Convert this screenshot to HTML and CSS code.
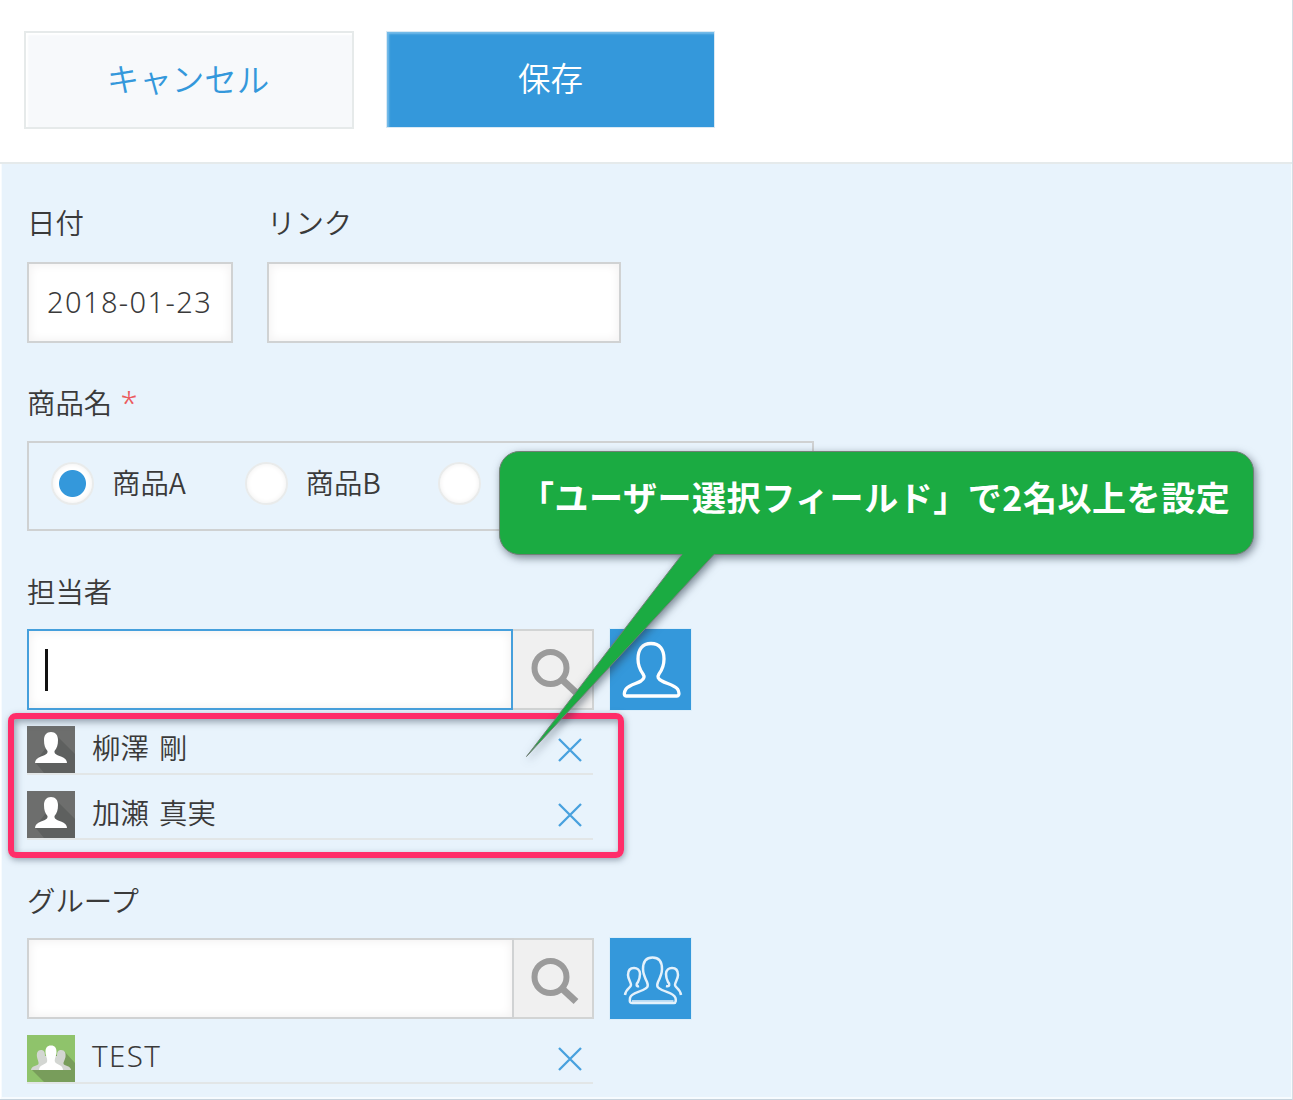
FILE: index.html
```html
<!DOCTYPE html>
<html lang="ja">
<head>
<meta charset="utf-8">
<title>レコード編集</title>
<link rel="stylesheet" href="styles.css">
</head>
<body>
<svg class="defs" width="0" height="0" aria-hidden="true">
  <symbol id="search" viewBox="0 0 80 80">
    <circle cx="36.500" cy="38" r="16" fill="none" stroke="#9b9b9b" stroke-width="6"/>
    <path d="M48.500 50 62 62.500" stroke="#9b9b9b" stroke-width="7"/>
  </symbol>
  <symbol id="close" viewBox="0 0 24 24">
    <path d="M1 1 23 23M23 1 1 23" fill="none" stroke="#48a1de" stroke-width="2.300"/>
  </symbol>
  <symbol id="avatar" viewBox="0 0 48 47">
    <path d="M0 0H48V47H0Z" fill="#6d6e6d"/>
    <path d="M29 9 48 28V47H17L8 36Z" fill="#5e605f"/>
    <path d="M24 6C19.500 6 17 9 17 14C17 19 18 22 20.500 25C21 28 18 29 14 30.500C10 32 8 34 8 37H40C40 34 38 32 34 30.500C30 29 27 28 27.500 25C30 22 31 19 31 14C31 9 28.500 6 24 6Z" fill="#fff"/>
  </symbol>
</svg>
<div class="page">
  <header class="toolbar">
    <button class="btn cancel">キャンセル</button>
    <button class="btn save">保存</button>
  </header>
  <main class="form">
    <div class="row">
      <div class="field date">
        <div class="label">日付</div>
        <div class="input">2018-01-23</div>
      </div>
      <div class="field link">
        <div class="label">リンク</div>
        <div class="input"></div>
      </div>
    </div>
    <div class="field product">
      <div class="label">商品名 <span class="required">*</span></div>
      <div class="radios">
        <div class="choice"><i class="radio checked"></i><span>商品A</span></div>
        <div class="choice"><i class="radio"></i><span>商品B</span></div>
        <div class="choice"><i class="radio"></i></div>
      </div>
    </div>
    <div class="field users">
      <div class="label">担当者</div>
      <div class="picker">
        <div class="query focus"><i class="caret"></i></div>
        <div class="search"><svg width="80" height="80"><use href="#search"/></svg></div>
        <div class="pick">
          <svg width="81" height="81" viewBox="0 0 81 81"><path d="M41 14.500C32 14.500 28 21 28 30C28 37 30 41 33 45C35 48 34 50 31 52C27 54.500 19 56 16 60C14 63 13.500 67 16 67H67C70 67 69 62 67.500 60C64 56 56 54.500 52 52C48 50 47 48 49 45C52 41 54 37 54 30C54 21 50 14.500 41 14.500Z" fill="none" stroke="#fff" stroke-width="3.300"/></svg>
        </div>
      </div>
      <ul class="selected">
        <li><svg width="48" height="47"><use href="#avatar"/></svg><span>柳澤 剛</span><svg class="x" width="24" height="24"><use href="#close"/></svg></li>
        <li><svg width="48" height="47"><use href="#avatar"/></svg><span>加瀬 真実</span><svg class="x" width="24" height="24"><use href="#close"/></svg></li>
      </ul>
    </div>
    <div class="field groups">
      <div class="label">グループ</div>
      <div class="picker">
        <div class="query"></div>
        <div class="search"><svg width="80" height="80"><use href="#search"/></svg></div>
        <div class="pick">
          <svg width="81" height="81" viewBox="0 0 81 81" fill="none" stroke="#e4f1fb" stroke-width="2.500">
            <path d="M42.500 19.500C36 19.500 33 24 33 31C33 36 35 40 37 44C39 49 37 50 33 52C28 54.500 21 55 20 60C19.500 64 20 65 22 65H64C66 65 66 62 65.500 60C64 55 57 54.500 52 52C48 50 46 49 48 44C50 40 52 36 52 31C52 24 49 19.500 42.500 19.500Z"/>
            <path d="M22 63H63.500" stroke-width="1.500"/>
            <path d="M29 48C26 49 26 46 28 44C30 40 30 38 30 36C30 32 27 30 24 30C20 30 18 33 18 37C18 41 21 44 21 47C21 50 16 50 15 57"/>
            <path d="M56 48C60 49 60 46 58 44C56 40 56 38 56 36C56 32 59 30 62 30C66 30 68 33 68 37C68 41 65 44 65 47C65 50 70 50 71 57"/>
          </svg>
        </div>
      </div>
      <ul class="selected">
        <li><svg width="48" height="47" viewBox="0 0 48 47">
          <path d="M0 0H48V47H0Z" fill="#8fc36b"/>
          <path d="M37 16 48 28V47H17L4 34Z" fill="#789d5b"/>
          <path d="M14 15C10.500 15 9.500 18 10 22C10.500 25 12 27 11.500 29C10 31 4 31 4 35H44C44 31 38 31 36.500 29C36 27 38 25 38.500 22C39 18 38 15 34 15C31 15 30 17 30 21H18C18 17 17 15 14 15Z" fill="#d3d6d2"/>
          <path d="M24 10.500C20 10.500 18.500 13 18.500 17C18.500 21 21 24 20 27C19 29.500 12 29.500 12 35H36C36 29.500 29 29.500 28 27C27 24 29.500 21 29.500 17C29.500 13 28 10.500 24 10.500Z" fill="#fff"/>
        </svg><span class="latin">TEST</span><svg class="x" width="24" height="24"><use href="#close"/></svg></li>
      </ul>
    </div>
  </main>
  <div class="highlight"></div>
  <div class="callout">
    <svg width="755" height="308" viewBox="0 0 755 308"><path d="M21 .5H734A20 20 0 0 1 754.500 21V83A20 20 0 0 1 734 103.500H215L27.500 305.500 183 103.500H21A20 20 0 0 1 .5 83V21A20 20 0 0 1 21 .5Z" fill="#1bab42" stroke="#718076" stroke-width="1"/></svg>
    <p>「ユーザー選択フィールド」で2名以上を設定</p>
  </div>
</div>
</body>
</html>
```

FILE: styles.css
```css
* { box-sizing: border-box; }
body {
  margin: 0;
  font-family: "Noto Sans", "Noto Sans CJK JP", sans-serif;
  font-size: 28px;
  color: #3a3a3a;
}
.defs { position: absolute; }
.page {
  position: relative;
  width: 1293px;
  height: 1100px;
  overflow: hidden;
  background: #fff;
  border-right: 1px solid #d5dde3;
  border-bottom: 1px solid #c6d2dc;
  display: flex;
  flex-direction: column;
}
.toolbar {
  display: flex;
  flex: none;
  gap: 32px;
  height: 164px;
  padding: 31px 24px 0;
  border-bottom: 2px solid #e5eaeb;
}
.btn {
  width: 330px;
  height: 98px;
  padding: 0 0 6px;
  border: 2px solid #e6eaea;
  font: 350 32.5px "Noto Sans CJK JP", sans-serif;
}
.cancel { padding-right: 2px; background: #f7f9fb; color: #3498db; box-shadow: inset 2px 2px 2px #fff; }
.save {
  width: 329px;
  height: 97px;
  border: 1px solid #d9e9f4;
  background: #3498db;
  color: #fff;
  box-shadow: inset 2px 2px 2px #76bce9;
}
.form {
  flex: 1;
  min-height: 0;
  margin: 0 1px 2px 2px;
  padding: 38px 0 0 25px;
  background: #e8f3fc;
  box-shadow: 0 1px 0 1px #f7fbfe;
  font-weight: 350;
}
.row { display: flex; gap: 34px; }
.label { height: 40px; line-height: 40px; font-size: 28.4px; white-space: nowrap; }
.label, .choice, .selected { font-family: "Noto Sans CJK JP", sans-serif; }
.required { color: #ec5a5e; font-family: "Noto Sans", sans-serif; font-size: 31px; line-height: 1; margin-left: 2px; }
.input, .query {
  border: 2px solid #d0d2d3;
  background: #fff;
  box-shadow: inset 0 0 8px 2px #f4f3f3;
}
.input {
  height: 81px;
  margin-top: 20px;
  padding-left: 18px;
  line-height: 75px;
  font-size: 29px;
  font-weight: 350;
  letter-spacing: 1.4px;
  white-space: nowrap;
}
.date { width: 206px; }
.link { width: 354px; }
.product { padding-top: 39px; }
.radios {
  display: flex;
  width: 787px;
  height: 90px;
  margin-top: 19px;
  padding: 19px 0 0 22px;
  border: 2px solid #cfd1d2;
}
.choice { display: flex; width: 193.500px; line-height: 40px; font-size: 28.4px; }
.radio {
  width: 43px;
  height: 43px;
  margin-right: 18px;
  border: 2px solid #e9ebeb;
  border-radius: 50%;
  background: #fff;
  box-shadow: inset 0 0 5px #f0efee;
}
.checked { background: radial-gradient(circle, #3498db 13px, #fff 14px); }
.users { padding-top: 40px; }
.picker { display: flex; margin-top: 18px; }
.query { width: 486px; height: 81px; padding: 18px 0 0 16px; }
.query:not(.focus) { width: 487px; }
.query:not(.focus) + .search { width: 80px; }
.query.focus { border-color: #459fdc; }
.caret { display: block; width: 3px; height: 42px; background: #111; }
.search {
  width: 81px;
  height: 81px;
  overflow: hidden;
  border: 2px solid #d2d4d4;
  border-left: 0;
  background: #f0f0f0;
}
.search svg { display: block; margin: -1px 0 0 1px; }
.query:not(.focus) + .search svg { margin-left: 0; }
.pick { width: 81px; height: 81px; margin-left: 16px; background: #3498db; box-shadow: 0 0 0 1px #dceefa; }
.pick svg { display: block; }
.selected { list-style: none; width: 566px; margin: 16px 0 0; padding: 0; font-size: 28.4px; }
.selected li {
  display: flex;
  height: 49px;
  margin-bottom: 15.5px;
  border-bottom: 2px solid #e2e6e7;
}
.selected span { margin-left: 17px; line-height: 41px; white-space: pre; word-spacing: 4px; }
.selected .latin { font-family: "Noto Sans", sans-serif; font-size: 29.5px; font-weight: 350; letter-spacing: 1.4px; }
.selected .x { margin: 12px 11px 0 auto; }
.groups { padding-top: 24.5px; }
.highlight {
  position: absolute;
  left: 8px;
  top: 713px;
  width: 616px;
  height: 145px;
  border: 6px solid #ff2d69;
  border-radius: 8px;
  box-shadow: 1px 2px 6px #607080a0, inset 2px 3px 7px #607080a0;
}
.callout { position: absolute; left: 499px; top: 451px; width: 755px; height: 308px; }
.callout svg { display: block; overflow: visible; filter: drop-shadow(2px 3px 4px #20304090); }
.callout p {
  position: absolute;
  left: 21px;
  top: 21px;
  margin: 0;
  color: #fff;
  font: 700 34px/50px "Noto Sans CJK JP", sans-serif;
  letter-spacing: .55px;
  white-space: nowrap;
}
```
